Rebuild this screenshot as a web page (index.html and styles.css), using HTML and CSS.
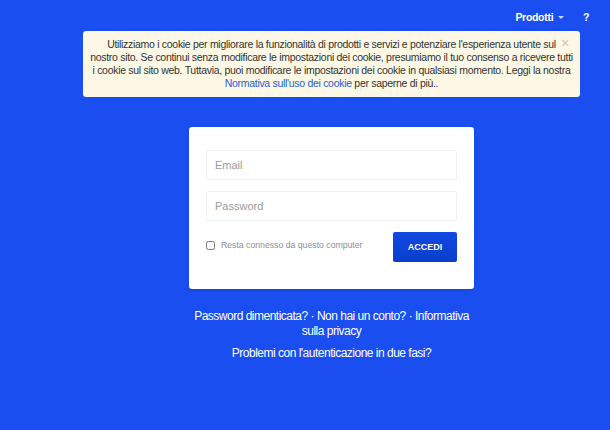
FILE: index.html
```html
<!DOCTYPE html>
<html lang="it">
<head>
  <meta charset="UTF-8" />
  <meta name="viewport" content="width=device-width, initial-scale=1.0"/>
  <title>Accedi</title>
  <link rel="stylesheet" href="styles.css">
</head>
<body>

<header class="topbar">
  <a class="menu-link" href="#">Prodotti <span class="caret"></span></a>
  <a class="help-link" href="#">?</a>
</header>

<!-- Cookie notice -->
<div class="cookie-banner">
  <span class="cookie-close">&times;</span>
  <p>Utilizziamo i cookie per migliorare la funzionalità di prodotti e servizi e potenziare l'esperienza utente sul<br>
  nostro sito. Se continui senza modificare le impostazioni dei cookie, presumiamo il tuo consenso a ricevere tutti<br>
  i cookie sul sito web. Tuttavia, puoi modificare le impostazioni dei cookie in qualsiasi momento. Leggi la nostra<br>
  <a href="#">Normativa sull'uso dei cookie</a> per saperne di più..</p>
</div>

<main class="login">
  <form class="login-card">
    <input type="text" class="field" placeholder="Email">
    <input type="password" class="field" placeholder="Password">
    <div class="login-row">
      <label class="remember"><input type="checkbox"> Resta connesso da questo computer</label>
      <button type="button" class="login-button">ACCEDI</button>
    </div>
  </form>

  <div class="login-links">
    <p><a href="#">Password dimenticata?</a> · <a href="#">Non hai un conto?</a> · <a href="#">Informativa sulla privacy</a></p>
    <p><a href="#">Problemi con l'autenticazione in due fasi?</a></p>
  </div>
</main>

</body>
</html>
```

FILE: styles.css
```css
/* Global Styling */
body {
  font-family: 'Liberation Sans', Arial, sans-serif;
  margin: 0;
  padding: 0;
  background: #1a4ef1;
  color: #fff;
  height: 430px;
}

a {
  color: inherit;
  text-decoration: none;
}

/* Top bar */
.topbar {
  display: flex;
  justify-content: flex-end;
  align-items: center;
  gap: 19px;
  height: 34px;
  padding: 0 21px 0 0;
  font-size: 10.5px;
  font-weight: bold;
  letter-spacing: -0.3px;
}

.caret {
  display: inline-block;
  margin-left: 2px;
  vertical-align: 2px;
  border-left: 3px solid transparent;
  border-right: 3px solid transparent;
  border-top: 3px solid #c9d6ff;
}

/* Cookie banner */
.cookie-banner {
  position: relative;
  width: 497px;
  margin: -3px 30px 0 auto;
  box-sizing: border-box;
  background: #fcf8e5;
  border-radius: 3px;
  padding: 7px 4px 7px;
  color: #333;
  text-align: center;
  font-size: 10.5px;
  line-height: 13px;
  letter-spacing: -0.3px;
  white-space: nowrap;
}

.cookie-banner p {
  margin: 0;
}

.cookie-banner a {
  color: #2a5bd7;
}

.cookie-close {
  position: absolute;
  top: 5px;
  right: 11px;
  color: #c5c5c5;
  font-size: 14px;
  line-height: 14px;
}

/* Login */
.login {
  width: 285px;
  margin: 30px 0 0 189px;
}

.login-card {
  background: #fff;
  border-radius: 3px;
  padding: 23px 17px 27px;
  display: flex;
  flex-direction: column;
  gap: 11px;
  box-shadow: 0 1px 3px rgba(0, 0, 0, 0.15);
}

.field {
  height: 30px;
  box-sizing: border-box;
  border: 1px solid #eef0f3;
  border-radius: 2px;
  padding: 0 8px;
  font-family: inherit;
  font-size: 11px;
  color: #333;
  outline: none;
}

.field::placeholder {
  color: #9a9a9a;
}

.login-row {
  display: flex;
  justify-content: space-between;
  align-items: center;
}

.remember {
  display: flex;
  align-items: center;
  gap: 6px;
  font-size: 8.7px;
  color: #8a8f99;
  margin-top: -4px;
}

.remember input {
  margin: 0;
  width: 9px;
  height: 9px;
}

.login-button {
  width: 64px;
  height: 30px;
  border: none;
  border-radius: 2px;
  background: linear-gradient(#1148e0, #0a3fcc);
  color: #fff;
  font-family: inherit;
  font-size: 9px;
  font-weight: bold;
  cursor: pointer;
}

.login-links {
  text-align: center;
  font-size: 12px;
  line-height: 15px;
  letter-spacing: -0.5px;
  padding: 0 4px;
  margin-top: 20px;
}

.login-links p {
  margin: 0 0 7px;
}
```
